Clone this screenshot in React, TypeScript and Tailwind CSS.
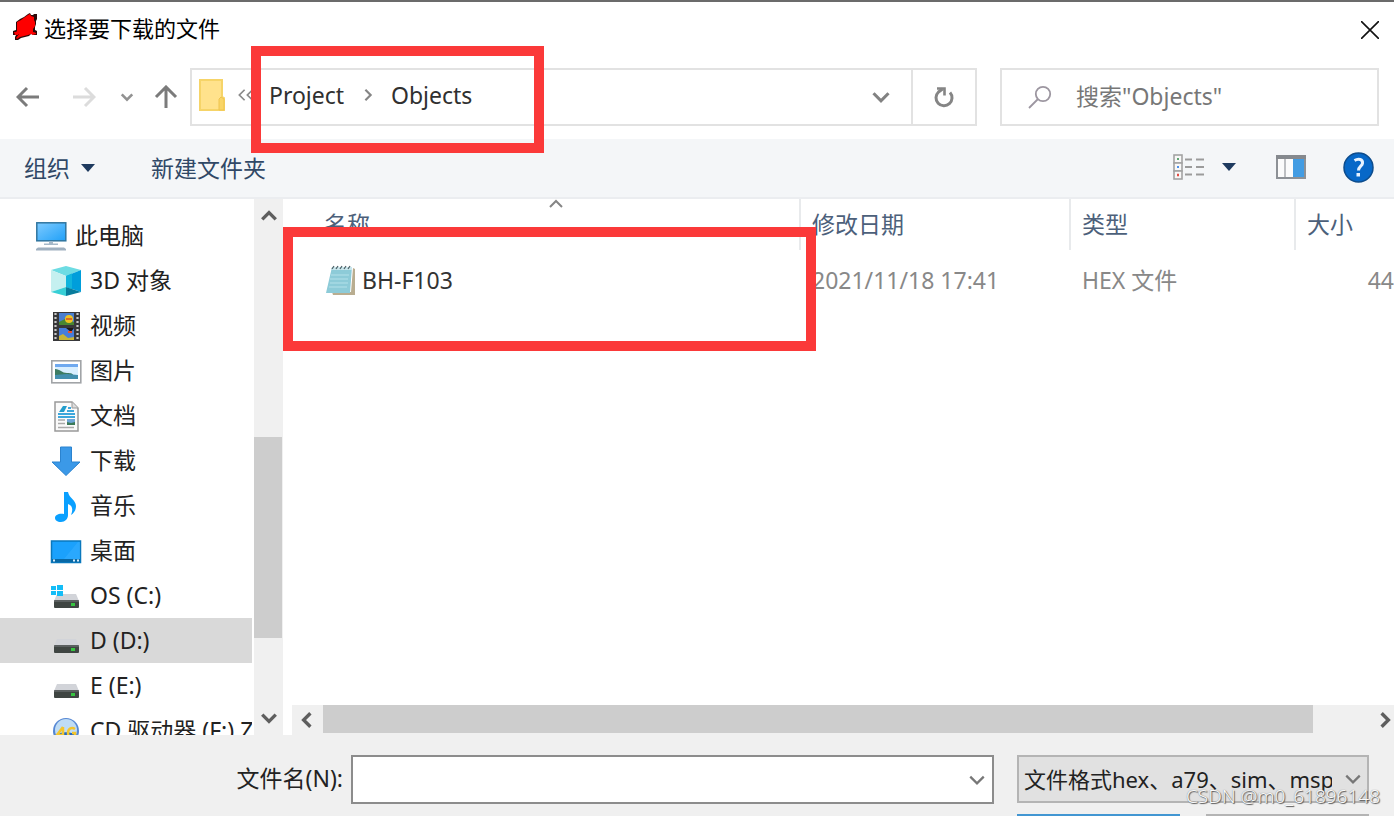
import type { ReactNode } from "react";

function DeviceLogo() {
  return (
    <svg className="h-7 w-6" viewBox="0 0 24 28" aria-hidden="true">
      <path d="M15 1l2-1 1 2h2l1-1h3v5l-1 2v3l-1 3v3l2 1v4h-3l-3-1-2 2-4 1-4 1-3 2H2v-3l1-2H0v-4l3-1V9l4-3 4-2z" fill="#2b0909" />
      <path d="M15 2l2-1 1 2 3 1v3l1 2v4l-2 3v3l3 1v1h-5l-3 1-4 1-4 1-3 2-1-1 3-4-4 1v-2l2-2V9l4-2 4-3z" fill="#fe0000" />
      <path d="M1 19h4v3H2zM18 19l5 1v1l-4 1z" fill="#fe0000" />
    </svg>
  );
}

function Chevron({ dir, className }: { dir: "up" | "down" | "left" | "right"; className: string }) {
  const paths = {
    up: "M2 11l6-6 6 6",
    down: "M2 5l6 6 6-6",
    left: "M11 2L5 8l6 6",
    right: "M5 2l6 6-6 6",
  };
  return (
    <svg className={className} viewBox="0 0 16 16" fill="none" stroke="currentColor" aria-hidden="true">
      <path d={paths[dir]} />
    </svg>
  );
}

function Arrow({ dir, className }: { dir: "left" | "right" | "up"; className: string }) {
  const paths = {
    left: "M23 12H2M11 3l-9 9 9 9",
    right: "M1 12h21M13 3l9 9-9 9",
    up: "M12 23V3M2 12l10-10 10 10",
  };
  return (
    <svg className={className} viewBox="0 0 24 24" fill="none" stroke="currentColor" strokeWidth="3" aria-hidden="true">
      <path d={paths[dir]} />
    </svg>
  );
}

function Triangle() {
  return (
    <svg className="h-2 w-[14px]" viewBox="0 0 14 8" aria-hidden="true">
      <path d="M0 0h14L7 8z" fill="#1e3a5f" />
    </svg>
  );
}

function FolderIcon() {
  return (
    <svg className="h-8 w-[26px]" viewBox="0 0 26 32" aria-hidden="true">
      <path d="M1 1h22v17l2 1v12H1z" fill="#ffe28c" stroke="#f6d468" strokeWidth="2" />
      <path d="M20 31V20l2-2 3 2v11z" fill="#f9d567" stroke="#efc44e" />
    </svg>
  );
}

function RefreshIcon() {
  return (
    <svg className="h-6 w-6" viewBox="0 0 24 24" fill="none" stroke="#858585" strokeWidth="3" aria-hidden="true">
      <path d="M18 7.500a8 8 0 1 1-11.500-.5l4-3" />
      <path d="M5 3.500h7.500v7" strokeWidth="2.600" />
    </svg>
  );
}

function SearchIcon() {
  return (
    <svg className="h-6 w-6" viewBox="0 0 24 24" fill="none" stroke="#9c96a0" strokeWidth="1.8" aria-hidden="true">
      <circle cx="15" cy="9" r="7.2" />
      <path d="M10 14l-9 9" />
    </svg>
  );
}

function ViewIcon() {
  return (
    <svg className="h-[26px] w-8" viewBox="0 0 32 26" fill="none" aria-hidden="true">
      <g stroke="#a3a3a3" strokeWidth="1.6" fill="#f8f8f8">
        <rect x="1" y="1" width="8" height="8" />
        <rect x="1" y="9" width="8" height="8" />
        <rect x="1" y="17" width="8" height="8" />
      </g>
      <path d="M12 5.500h7M23 5.500h8M12 13h7M23 13h8M12 20.500h7M23 20.500h8" stroke="#9b9b9b" strokeWidth="2" />
      <path d="M4 5h2" stroke="#5fa572" strokeWidth="2" />
      <path d="M4 13h2" stroke="#4c8fea" strokeWidth="2" />
      <path d="M4 21h2" stroke="#e34c44" strokeWidth="2.500" />
    </svg>
  );
}

function PaneIcon() {
  return (
    <svg className="h-6 w-[30px]" viewBox="0 0 30 24" aria-hidden="true">
      <rect x="1" y="1" width="28" height="22" fill="#fbfbfb" stroke="#8d9196" strokeWidth="2" />
      <path d="M0 2h30" stroke="#85898e" strokeWidth="4" />
      <path d="M9 4v18" stroke="#a8abaf" strokeWidth="1.500" />
      <rect x="17" y="4" width="11" height="18" fill="#429ce3" />
    </svg>
  );
}

function HelpIcon() {
  return (
    <svg className="h-[31px] w-[31px]" viewBox="0 0 31 31" aria-hidden="true">
      <circle cx="15.500" cy="15.500" r="14.500" fill="#0768c8" stroke="#0d4c8c" strokeWidth="1.500" />
      <path d="M11.500 8.500c4-2.500 8.500-1 8 2.700-.4 3-4 3.200-4 7.300" fill="none" stroke="#e6f2ff" strokeWidth="3" />
      <rect x="13.500" y="21" width="3.500" height="3.500" fill="#e6f2ff" />
    </svg>
  );
}

function Icon({ children }: { children: ReactNode }) {
  return (
    <svg className="h-8 w-8 shrink-0" viewBox="0 0 32 32" aria-hidden="true">
      {children}
    </svg>
  );
}

const computerIcon = (
  <Icon>
    <defs>
      <linearGradient id="screen" x1="0" y1="0" x2="1" y2="1">
        <stop offset="0" stopColor="#7fcbff" />
        <stop offset="1" stopColor="#1fa0f8" />
      </linearGradient>
    </defs>
    <rect x="1.800" y="2.800" width="29" height="18" fill="url(#screen)" stroke="#30759f" strokeWidth="1.500" />
    <path d="M14 21.500h4v2h5v1.500H9v-1.500h5z" fill="#a5b8c8" />
    <path d="M3 27.500h26l2 1.500v1.500H1V29z" fill="#9fb0c0" />
  </Icon>
);

const cubeIcon = (
  <Icon>
    <path d="M1 5l15-4 15 4-15 6z" fill="#6ddce3" />
    <path d="M1 5l15 6v11L1 27z" fill="#c5f0f0" />
    <path d="M31 5l-15 6v11l15 5z" fill="#009edb" />
    <path d="M16 11l6-2.400v15.400l-6-2z" fill="#10b4dc" />
    <path d="M1 27l15-5v9z" fill="#38cfd6" />
    <path d="M31 27l-15-5v9z" fill="#087c9c" />
  </Icon>
);

const videoIcon = (
  <Icon>
    <rect x="3" y="2" width="27" height="29" fill="#38383a" />
    <path d="M5.500 3v27M27.500 3v27" stroke="#c9c9c9" strokeWidth="2.200" strokeDasharray="2 2" />
    <rect x="9" y="3" width="15" height="12" fill="#4a7fd0" />
    <rect x="9" y="18" width="15" height="12" fill="#477ddb" />
    <path d="M9 15v-3l6-3 9 3v3z" fill="#498632" />
    <circle cx="19" cy="9" r="4" fill="#efc322" />
    <path d="M16 9h6" stroke="#d64b25" strokeWidth="1.500" />
    <path d="M9 26l4-2 5 4 6-1v3H9z" fill="#c8b436" />
    <path d="M16 18h8l-3 4z" fill="#1e1915" />
    <path d="M18 22h4" stroke="#e95330" strokeWidth="2" />
  </Icon>
);

const pictureIcon = (
  <Icon>
    <rect x="1.800" y="5.800" width="29" height="22" fill="#fff" stroke="#a1a4a7" strokeWidth="1.600" />
    <rect x="5" y="9" width="23" height="15" fill="#d9efff" />
    <path d="M5 9h23v3H5z" fill="#6fa9ef" />
    <path d="M5 14c5 0 7 4 12 4s6 1 6 2H5z" fill="#3d7c62" />
    <path d="M5 20l12-1 11 1v4H5z" fill="#438fae" />
  </Icon>
);

const documentIcon = (
  <Icon>
    <path d="M5 2h17l6 6v23H5z" fill="#fafafa" stroke="#999" strokeWidth="1.500" />
    <path d="M22 2v6h6" fill="#ddd" stroke="#999" />
    <path d="M9 12l4-6h4l-3 6z" fill="#239dcc" />
    <path d="M18 8h3M17 11h7M8 14h17M8 17h17" stroke="#3da7dc" strokeWidth="1.800" />
    <path d="M8 20h7M8 23.500h7M8 27.500h16" stroke="#aaa" strokeWidth="1.300" />
    <path d="M17 19h8v6h-8z" fill="#6fa6d7" />
    <path d="M17 22l4 1 4-1v3h-8z" fill="#3b7a58" />
  </Icon>
);

const downloadIcon = (
  <Icon>
    <path d="M10.500 2h11v15H30L16 30.500 2 17h8.500z" fill="#3b99e8" stroke="#2b83cf" />
  </Icon>
);

const musicIcon = (
  <Icon>
    <path d="M14 2h4c1 6 8 8 8 14 0 4-2 7-5 9 2-5 2-9-3-11v11c0 4-3 7-7 7-4 0-6-2-6-4 0-3 4-5 9-4z" fill="#0aa0ff" />
  </Icon>
);

const desktopIcon = (
  <Icon>
    <rect x="1.500" y="6" width="29" height="21.500" fill="#1ba1fc" stroke="#0a78bd" strokeWidth="1.500" />
    <path d="M14 24L28 7h2v17z" fill="#35aeff" opacity=".6" />
    <path d="M2 25.500h28" stroke="#0868a5" strokeWidth="3" />
    <path d="M3 25.500h2M23 25.500h2M27 25.500h2" stroke="#d8efff" strokeWidth="1.800" />
  </Icon>
);

function DriveShape() {
  return (
    <>
      <path d="M7 14h19l3 7H4z" fill="#d2d4d9" />
      <rect x="4" y="20" width="25" height="8" rx="1" fill="#3f4542" />
      <path d="M4 21h25" stroke="#777a7c" />
      <rect x="21" y="23" width="4" height="3" fill="#36c440" />
    </>
  );
}

const driveIcon = (
  <Icon>
    <DriveShape />
  </Icon>
);

const systemDriveIcon = (
  <Icon>
    <DriveShape />
    <path d="M1 6h5v4H1zM7 5h6v5H7zM1 11h5v4H1zM7 11h6v5H7z" fill="#14bdf7" />
  </Icon>
);

const discIcon = (
  <Icon>
    <circle cx="16" cy="16" r="13" fill="#5587d4" />
    <circle cx="16" cy="15" r="11" fill="#bfdcf4" />
    <path d="M4 21c6-5 18-5 24 0l-3 6H8z" fill="#2468c0" />
    <path d="M13 12l-6 8h7M13 12v12M25 14c-3-2-7-1-7 4s6 5 7 3v-3h-3" fill="none" stroke="#f3c52c" strokeWidth="2.500" />
  </Icon>
);

function NotepadIcon() {
  return (
    <Icon>
      <path d="M29 4l2 1v26H9l-1-3h19z" fill="#b9ad90" />
      <path d="M8 3h20l-2 26H2z" fill="#8dcbd8" />
      <path d="M8 3h20v3H8z" fill="#c9e6ec" />
      <path d="M7 11h18M6 15h18M6 19h18M5 23h18" stroke="#b4e1ea" />
      <path d="M8 5l2-3M12 5l2-3M16 5l2-3M20 5l2-3M24 5l2-3" stroke="#4e646a" strokeWidth="1.300" />
    </Icon>
  );
}

const places = [
  { label: "3D 对象", icon: cubeIcon },
  { label: "视频", icon: videoIcon },
  { label: "图片", icon: pictureIcon },
  { label: "文档", icon: documentIcon },
  { label: "下载", icon: downloadIcon },
  { label: "音乐", icon: musicIcon },
  { label: "桌面", icon: desktopIcon },
  { label: "OS (C:)", icon: systemDriveIcon },
  { label: "D (D:)", icon: driveIcon, selected: true },
  { label: "E (E:)", icon: driveIcon },
  { label: "CD 驱动器 (F:) Z", icon: discIcon },
];

function TitleBar() {
  return (
    <header className="flex h-[66px] shrink-0 items-start justify-between border-t-2 border-[#6b6b6b] pr-[11px] pl-[13px]">
      <div className="flex items-start gap-[7px] pt-[11px]">
        <DeviceLogo />
        <h1 className="text-[22px] leading-[30px] text-black">选择要下载的文件</h1>
      </div>
      <button aria-label="关闭" className="mt-[15px] p-1">
        <svg className="h-[18px] w-[18px]" viewBox="0 0 18 18" stroke="#111" strokeWidth="1.600" aria-hidden="true">
          <path d="M0 0l18 18M18 0L0 18" />
        </svg>
      </button>
    </header>
  );
}

function NavigationBar() {
  return (
    <nav className="flex h-[73px] shrink-0 items-start pt-[2px] pr-[15px] pl-4">
      <div className="flex h-[58px] w-[174px] shrink-0 items-center">
        <button aria-label="后退" className="text-[#7b7b7b]"><Arrow dir="left" className="h-6 w-6" /></button>
        <button aria-label="前进" className="ml-8 text-[#dcdcdc]"><Arrow dir="right" className="h-6 w-6" /></button>
        <button aria-label="最近的位置" className="ml-6 text-[#929292]"><Chevron dir="down" className="h-[14px] w-[14px] stroke-[3]" /></button>
        <button aria-label="上移" className="ml-5 text-[#7b7b7b]"><Arrow dir="up" className="h-6 w-6" /></button>
      </div>
      <div className="relative flex h-[58px] min-w-0 flex-1 items-stretch border-2 border-[#e2e2e2]">
        <div className="flex flex-1 items-center pb-1 pl-[7px] text-[23px] text-[#303030]">
          <FolderIcon />
          <span className="ml-2 flex w-[30px] pl-[2px] text-[#8a8a8a]">
            <Chevron dir="left" className="-mr-[6px] h-[14px] w-[14px] stroke-2" />
            <Chevron dir="left" className="h-[14px] w-[14px] stroke-2" />
          </span>
          <button className="ml-[6px] w-[84px] text-left">Project</button>
          <span className="w-[38px] pl-2 text-[#858585]"><Chevron dir="right" className="h-[14px] w-[14px] stroke-[2.5]" /></span>
          <button>Objects</button>
        </div>
        <button aria-label="以前的位置" className="px-5 text-[#828282]"><Chevron dir="down" className="h-5 w-5 stroke-[2.5]" /></button>
        <button aria-label="刷新" className="flex w-16 items-center justify-center border-l-2 border-[#e2e2e2]"><RefreshIcon /></button>
        <div className="pointer-events-none absolute -top-6 left-[59px] z-20 h-[107px] w-[293px] border-[10px] border-[#fb3939]" />
      </div>
      <label className="ml-[23px] flex h-[58px] w-[379px] shrink-0 items-center border-2 border-[#e2e2e2] pl-[26px]">
        <SearchIcon />
        <input
          aria-label="搜索"
          placeholder={'搜索"Objects"'}
          className="ml-6 min-w-0 flex-1 bg-transparent pb-[2px] text-[23px] outline-none placeholder:text-[#777]"
        />
      </label>
    </nav>
  );
}

function Toolbar() {
  return (
    <div className="flex h-[60px] shrink-0 items-center justify-between border-b-2 border-[#ebedf0] bg-[#f4f6f8] pr-5 pl-6 text-[23px] text-[#304866]">
      <div className="flex items-center">
        <button className="flex items-center gap-[11px]">组织<Triangle /></button>
        <button className="ml-14">新建文件夹</button>
      </div>
      <div className="flex items-center pb-[2px]">
        <button aria-label="更改视图"><ViewIcon /></button>
        <button aria-label="更多视图选项" className="ml-[17px]"><Triangle /></button>
        <button aria-label="预览窗格" className="ml-10"><PaneIcon /></button>
        <button aria-label="帮助" className="ml-[37px]"><HelpIcon /></button>
      </div>
    </div>
  );
}

function Sidebar() {
  return (
    <aside className="flex w-[284px] shrink-0 overflow-hidden">
      <ul className="w-[252px] overflow-hidden pt-[14px] text-[23px] text-[#222]">
        <li>
          <a href="#computer" className="flex h-[45px] items-center gap-2 pl-[35px]">
            {computerIcon}此电脑
          </a>
        </li>
        {places.map((place) => (
          <li key={place.label}>
            <a
              href="#place"
              className={
                place.selected
                  ? "flex h-[45px] items-center gap-2 bg-[#d9d9d9] pl-[50px] whitespace-nowrap"
                  : "flex h-[45px] items-center gap-2 pl-[50px] whitespace-nowrap"
              }
            >
              {place.icon}
              {place.label}
            </a>
          </li>
        ))}
      </ul>
      <div className="ml-[2px] flex w-[29px] flex-col items-center bg-[#f0f0f0] py-2 text-[#5e5e5e]">
        <Chevron dir="up" className="h-[18px] w-[18px] stroke-[3]" />
        <div className="flex w-full flex-1 flex-col pr-px">
          <div className="flex-[212]" />
          <div className="flex-[200] bg-[#cdcdcd]" />
          <div className="flex-[71]" />
        </div>
        <Chevron dir="down" className="h-[18px] w-[18px] stroke-[3]" />
      </div>
    </aside>
  );
}

function FileList() {
  return (
    <main className="relative flex min-w-0 flex-1 flex-col">
      <table className="w-full table-fixed border-collapse text-[23px]">
        <colgroup>
          <col />
          <col className="w-[270px]" />
          <col className="w-[225px]" />
          <col className="w-[99px]" />
        </colgroup>
        <thead>
          <tr className="h-[51px] text-left text-[#4c607a]">
            <th className="relative pl-10 font-normal">
              名称
              <Chevron dir="up" className="absolute -top-[3px] right-[235px] h-4 w-4 stroke-2 text-[#858585]" />
            </th>
            <th className="border-l-2 border-[#e8eaec] pl-[11px] font-normal">修改日期</th>
            <th className="border-l-2 border-[#e8eaec] pl-[11px] font-normal">类型</th>
            <th className="border-l-2 border-[#e8eaec] pl-[11px] font-normal">大小</th>
          </tr>
        </thead>
        <tbody>
          <tr className="h-[60px] text-[#888]">
            <td className="pl-10 text-[#333]">
              <span className="flex items-center gap-[6px]"><NotepadIcon />BH-F103</span>
            </td>
            <td className="pl-3 whitespace-nowrap">2021/11/18 17:41</td>
            <td className="pl-3">HEX 文件</td>
            <td className="text-right">44</td>
          </tr>
        </tbody>
      </table>
      <div className="pointer-events-none absolute top-7 right-[578px] -left-px z-20 h-[124px] border-[10px] border-[#fb3939]" />
      <div className="mt-auto ml-2 flex h-[30px] items-center bg-[#f0f0f0] pl-[6px] text-[#5e5e5e]">
        <Chevron dir="left" className="h-[18px] w-[18px] stroke-[3]" />
        <div className="ml-[7px] flex h-full flex-1 pb-[2px]">
          <div className="flex-[990] bg-[#cdcdcd]" />
          <div className="flex-[63]" />
        </div>
        <Chevron dir="right" className="h-[18px] w-[18px] stroke-[3]" />
      </div>
    </main>
  );
}

function Footer() {
  return (
    <footer className="relative h-[81px] shrink-0 overflow-hidden bg-[#f0f0f0] pt-5 pr-[25px] text-[22px] text-[#222]">
      <div className="flex items-start">
        <label htmlFor="file-name" className="w-[351px] shrink-0 pr-2 text-right text-[23px] leading-[46px]">文件名(N):</label>
        <div className="flex h-[49px] min-w-0 flex-1 items-center border-2 border-[#8c8c8c] bg-white pr-[6px]">
          <input id="file-name" className="h-full min-w-0 flex-1 px-2 outline-none" />
          <button aria-label="文件名历史" className="text-[#777]"><Chevron dir="down" className="h-[18px] w-[18px] stroke-2" /></button>
        </div>
        <div className="relative ml-[23px] w-[352px] shrink-0">
          <select aria-label="文件类型" className="h-12 w-full appearance-none border-2 border-[#b4b4b4] bg-[#e1e1e1] pr-[35px] pl-[5px] text-[22px]">
            <option>文件格式hex、a79、sim、msp430</option>
          </select>
          <Chevron dir="down" className="pointer-events-none absolute top-[15px] right-[7px] h-[18px] w-[18px] stroke-2 text-[#777]" />
        </div>
      </div>
      <div className="mt-[10px] flex justify-end gap-[26px]">
        <button aria-label="打开" className="h-10 w-[163px] border-2 border-[#4296d2] bg-[#e1e1e1]" />
        <button aria-label="取消" className="h-10 w-[163px] border-2 border-[#b4b4b4] bg-[#e1e1e1]" />
      </div>
      <p className="pointer-events-none absolute right-[14px] bottom-[6px] text-[19px] leading-7 font-light text-[#fafafa] [text-shadow:1px_1px_1px_#555,0_0_1px_#777]">
        CSDN @m0_61896148
      </p>
    </footer>
  );
}

export default function App() {
  return (
    <div className="flex h-screen flex-col overflow-hidden bg-white font-['Noto_Sans','Noto_Sans_CJK_SC',sans-serif]">
      <TitleBar />
      <NavigationBar />
      <Toolbar />
      <div className="flex min-h-0 flex-1">
        <Sidebar />
        <FileList />
      </div>
      <Footer />
    </div>
  );
}
